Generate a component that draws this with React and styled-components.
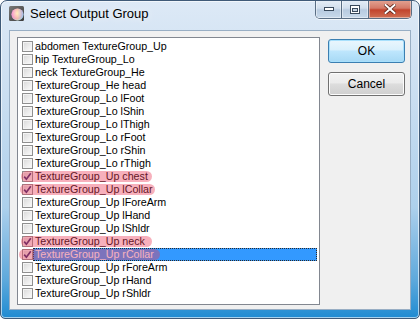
import React from 'react';
import styled, { createGlobalStyle } from 'styled-components';

const GlobalStyle = createGlobalStyle`
  html, body {
    margin: 0;
    padding: 0;
    background: #ffffff;
  }
  * {
    box-sizing: border-box;
  }
`;

const items = [
  { label: 'abdomen TextureGroup_Up' },
  { label: 'hip TextureGroup_Lo' },
  { label: 'neck TextureGroup_He' },
  { label: 'TextureGroup_He head' },
  { label: 'TextureGroup_Lo lFoot' },
  { label: 'TextureGroup_Lo lShin' },
  { label: 'TextureGroup_Lo lThigh' },
  { label: 'TextureGroup_Lo rFoot' },
  { label: 'TextureGroup_Lo rShin' },
  { label: 'TextureGroup_Lo rThigh' },
  { label: 'TextureGroup_Up chest', checked: true, mark: { left: 2, width: 131 } },
  { label: 'TextureGroup_Up lCollar', checked: true, mark: { left: 1, width: 135 } },
  { label: 'TextureGroup_Up lForeArm' },
  { label: 'TextureGroup_Up lHand' },
  { label: 'TextureGroup_Up lShldr' },
  { label: 'TextureGroup_Up neck', checked: true, mark: { left: 2, width: 131 } },
  { label: 'TextureGroup_Up rCollar', checked: true, selected: true, mark: { left: 0, width: 141 } },
  { label: 'TextureGroup_Up rForeArm' },
  { label: 'TextureGroup_Up rHand' },
  { label: 'TextureGroup_Up rShldr' },
];

const Window = styled.div`
  width: 420px;
  height: 319px;
  display: flex;
  flex-direction: column;
  padding: 0 8px 8px 8px;
  border: 1px solid #3f5a78;
  border-radius: 7px 7px 5px 5px;
  background: linear-gradient(180deg, #dde9f6 0%, #cadef1 30%, #add0ec 65%, #5ea9dc 88%, #1f8bd2 100%);
  box-shadow: inset 0 0 0 1px rgba(255, 255, 255, 0.6);
  overflow: hidden;
`;

const TitleBar = styled.div`
  height: 29px;
  flex-shrink: 0;
  display: flex;
  align-items: flex-start;
  margin-right: -1px;
`;

const TitleIcon = styled.svg`
  width: 15px;
  height: 15px;
  margin-top: 5px;
  flex-shrink: 0;
`;

const TitleText = styled.div`
  margin: 5px 0 0 6px;
  font-family: "Liberation Sans", Arial, sans-serif;
  font-size: 13px;
  color: #000;
  flex: 1;
  text-shadow: 0 0 8px rgba(255, 255, 255, 0.9);
`;

const CaptionGroup = styled.div`
  display: flex;
  height: 19px;
  margin-top: -1px;
  border: 1px solid #5a6e84;
  border-top: none;
  border-radius: 0 0 5px 5px;
  overflow: hidden;
  box-shadow: 0 1px 0 rgba(255, 255, 255, 0.7);
`;

const CaptionButton = styled.div`
  width: ${p => p.$w}px;
  height: 100%;
  display: flex;
  align-items: center;
  justify-content: center;
  border-left: ${p => (p.$first ? 'none' : '1px solid #5a6e84')};
  background: ${p => (p.$close
    ? 'linear-gradient(180deg, #e3a594 0%, #d47a68 45%, #c2442d 55%, #cf6f52 100%)'
    : 'linear-gradient(180deg, #e6eef7 0%, #d2dfed 45%, #b8cbe0 55%, #c8d9ea 100%)')};
  box-shadow: inset 0 0 0 1px rgba(255, 255, 255, 0.45);
`;

const Client = styled.div`
  flex: 1;
  display: flex;
  align-items: flex-start;
  gap: 8px;
  padding: 6px 0 0 7px;
  background: #f0f0f0;
  border: 1px solid #98aec4;
`;

const ListBox = styled.div`
  width: 303px;
  height: 268px;
  flex-shrink: 0;
  padding: 2px 2px 0 1px;
  background: #ffffff;
  border: 1px solid #828790;
`;

const Row = styled.div`
  position: relative;
  height: 13px;
  display: flex;
  align-items: center;
  padding-left: 3px;
  font-family: "Liberation Sans", Tahoma, Arial, sans-serif;
  font-size: 10.7px;
  color: #000;
  white-space: nowrap;
`;

const CheckBox = styled.div`
  width: 11px;
  height: 11px;
  flex-shrink: 0;
  display: flex;
  align-items: center;
  justify-content: center;
  border: 1px solid #8f8f8f;
  background: linear-gradient(135deg, #d8d8d8 0%, #eeeeee 60%, #fbfbfb 100%);
  box-shadow: inset 0 0 0 1px #f4f4f4;
`;

const Label = styled.span`
  margin-left: 0;
  padding: 0 2px;
  height: 13px;
  line-height: 13px;
  flex: ${p => (p.$selected ? 1 : '0 0 auto')};
  background: ${p => (p.$selected ? '#3399ff' : 'transparent')};
  color: ${p => (p.$selected ? '#ffffff' : '#000000')};
  outline: ${p => (p.$selected ? '1px dotted #2a2a2a' : 'none')};
  outline-offset: -1px;
`;

const Marker = styled.div`
  position: absolute;
  top: 1px;
  height: 11px;
  border-radius: 6px;
  background: rgba(236, 58, 88, 0.4);
  filter: blur(0.5px);
  pointer-events: none;
`;

const Buttons = styled.div`
  display: flex;
  flex-direction: column;
  gap: 9px;
  padding-top: 2px;
`;

const Button = styled.button`
  width: 77px;
  height: 24px;
  padding: 0;
  font-family: "Liberation Sans", Tahoma, Arial, sans-serif;
  font-size: 12px;
  color: #000;
  border-radius: 3px;
  border: 1px solid ${p => (p.$default ? '#3c7fb1' : '#707070')};
  background: ${p => (p.$default
    ? 'linear-gradient(180deg, #eaf6fd 0%, #d9f0fc 45%, #bee6fd 50%, #a7d9f5 100%)'
    : 'linear-gradient(180deg, #f2f2f2 0%, #ebebeb 45%, #dddddd 50%, #cfcfcf 100%)')};
  box-shadow: inset 0 0 0 1px ${p => (p.$default ? '#a8e0fc' : '#fcfcfc')};
`;

function AppIcon() {
  return (
    <TitleIcon viewBox="0 0 15 15">
      <defs>
        <linearGradient id="ig-bg" x1="0" y1="0" x2="1" y2="1">
          <stop offset="0" stopColor="#7a7a7a" />
          <stop offset="1" stopColor="#3a3a3a" />
        </linearGradient>
        <radialGradient id="ig-ball" cx="0.45" cy="0.4" r="0.6">
          <stop offset="0" stopColor="#fff6f0" />
          <stop offset="0.45" stopColor="#f5b6e0" />
          <stop offset="0.75" stopColor="#e08ad0" />
          <stop offset="1" stopColor="#9ecbf0" />
        </radialGradient>
        <linearGradient id="ig-tint" x1="0" y1="0" x2="1" y2="0">
          <stop offset="0" stopColor="#ff9ad0" stopOpacity="0.6" />
          <stop offset="0.5" stopColor="#ffe98a" stopOpacity="0.5" />
          <stop offset="1" stopColor="#8ad8ff" stopOpacity="0.6" />
        </linearGradient>
      </defs>
      <rect x="0" y="0" width="15" height="15" rx="1.5" fill="url(#ig-bg)" />
      <circle cx="8.5" cy="8.5" r="6" fill="url(#ig-ball)" />
      <circle cx="8.5" cy="8.5" r="6" fill="url(#ig-tint)" />
    </TitleIcon>
  );
}

function MinGlyph() {
  return (
    <svg width="10" height="4" viewBox="0 0 10 4">
      <rect x="0.5" y="0.5" width="9" height="3" fill="#ffffff" stroke="#3a4a5c" />
    </svg>
  );
}

function MaxGlyph() {
  return (
    <svg width="10" height="9" viewBox="0 0 10 9">
      <rect x="0.5" y="0.5" width="9" height="8" fill="#ffffff" stroke="#3a4a5c" />
      <rect x="2.5" y="3.5" width="5" height="3" fill="#c9d6e4" stroke="#3a4a5c" />
    </svg>
  );
}

function CloseGlyph() {
  return (
    <svg width="12" height="10" viewBox="0 0 12 10">
      <path d="M1.5 1 L10.5 9 M10.5 1 L1.5 9" stroke="#5a2418" strokeWidth="3.6" strokeLinecap="square" />
      <path d="M1.5 1 L10.5 9 M10.5 1 L1.5 9" stroke="#ffffff" strokeWidth="2" strokeLinecap="square" />
    </svg>
  );
}

function CheckMark() {
  return (
    <svg width="9" height="9" viewBox="0 0 9 9">
      <path d="M1.2 4.6 L3.4 7.2 L7.8 1.2" fill="none" stroke="#3b2a6e" strokeWidth="1.7" />
    </svg>
  );
}

export default function App() {
  return (
    <>
      <GlobalStyle />
      <Window>
        <TitleBar>
          <AppIcon />
          <TitleText>Select Output Group</TitleText>
          <CaptionGroup>
            <CaptionButton $w={25} $first><MinGlyph /></CaptionButton>
            <CaptionButton $w={27}><MaxGlyph /></CaptionButton>
            <CaptionButton $w={43} $close><CloseGlyph /></CaptionButton>
          </CaptionGroup>
        </TitleBar>
        <Client>
          <ListBox>
            {items.map(item => (
              <Row key={item.label}>
                <CheckBox>{item.checked && <CheckMark />}</CheckBox>
                <Label $selected={item.selected}>{item.label}</Label>
                {item.mark && (
                  <Marker style={{ left: item.mark.left, width: item.mark.width }} />
                )}
              </Row>
            ))}
          </ListBox>
          <Buttons>
            <Button $default>OK</Button>
            <Button>Cancel</Button>
          </Buttons>
        </Client>
      </Window>
    </>
  );
}
